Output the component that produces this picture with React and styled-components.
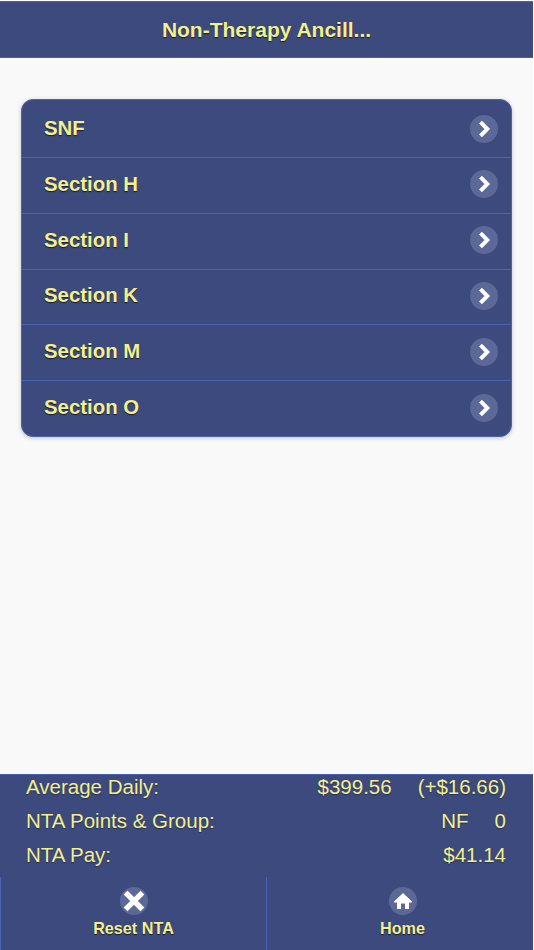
import React from "react";
import styled, { createGlobalStyle } from "styled-components";

const Global = createGlobalStyle`
  html, body { margin: 0; padding: 0; background: #ffffff; }
  body { font-family: "Liberation Sans", Arial, sans-serif; }
`;

const navy = "#3d4a7d";
const edge = "#4c63b5";
const cream = "#f4f08c";

const Page = styled.div`
  width: 533px;
  height: 950px;
  display: flex;
  flex-direction: column;
  background: #f9f9f9;
  overflow: hidden;
`;

const Header = styled.header`
  height: 55px;
  margin-top: 1px;
  flex: none;
  display: flex;
  align-items: center;
  justify-content: center;
  background: ${navy};
  border-top: 1px solid ${edge};
  border-bottom: 1px solid ${edge};
`;

const Title = styled.h1`
  margin: 0;
  font-size: 21px;
  font-weight: 700;
  color: ${cream};
  text-shadow: 0 1px 1px #15183a;
`;

const Content = styled.main`
  flex: 1;
  padding: 41px 21px 0;
`;

const List = styled.ul`
  list-style: none;
  margin: 0;
  padding: 0;
  background: ${navy};
  border: 1px solid ${edge};
  border-radius: 12px;
  box-shadow: 0 1px 4px rgba(0, 0, 0, 0.22);
  overflow: hidden;
`;

const Item = styled.li`
  height: ${(p) => (p.$first ? "57px" : "54.8px")};
  display: flex;
  align-items: center;
  justify-content: space-between;
  padding: 0 13px ${(p) => (p.$first ? "0" : "2px")} 22px;
  box-sizing: ${(p) => (p.$first ? "border-box" : "content-box")};
  height: ${(p) => (p.$first ? "57px" : "52.8px")};
  border-top: ${(p) => (p.$first ? "0" : `1px solid ${edge}`)};
`;

const ItemLabel = styled.span`
  font-size: 20.4px;
  font-weight: 700;
  color: ${cream};
  text-shadow: 0 1px 1px #15183a;
`;

const Badge = styled.span`
  width: 28px;
  height: 28px;
  border-radius: 50%;
  background: #5b6898;
  display: flex;
  align-items: center;
  justify-content: center;
  flex: none;
`;

const Footer = styled.footer`
  flex: none;
  background: ${navy};
  border-top: 1px solid ${edge};
`;

const Summary = styled.div`
  display: grid;
  grid-auto-rows: 24px;
  row-gap: 10px;
  padding: 0 27px 10px 26px;
`;

const SummaryRow = styled.div`
  display: flex;
  align-items: center;
  justify-content: space-between;
  font-size: 20.5px;
  color: ${cream};
  text-shadow: 0 1px 1px rgba(20, 24, 58, 0.55);
`;

const Values = styled.span`
  display: flex;
  gap: 26px;
`;

const Tabs = styled.nav`
  display: grid;
  grid-template-columns: 266px 1fr;
  height: 73px;
`;

const Tab = styled.button`
  appearance: none;
  background: none;
  border: 0;
  border-left: 1px solid ${edge};
  padding: 10px 0 0 ${(p) => p.$inset || "0"};
  display: flex;
  flex-direction: column;
  align-items: center;
  justify-content: flex-start;
  gap: 4px;
  font-family: inherit;
  font-size: 16.2px;
  font-weight: 700;
  color: ${cream};
  text-shadow: 0 1px 1px #15183a;
`;

const Chevron = () => (
  <svg width="16" height="20" viewBox="0 0 16 20">
    <path d="M4.5 3.2L11.3 10L4.5 16.8" fill="none" stroke="#fff" strokeWidth="4" />
  </svg>
);

const Close = () => (
  <svg width="22" height="22" viewBox="0 0 22 22">
    <path d="M4.5 4.5L17.5 17.5M17.5 4.5L4.5 17.5" fill="none" stroke="#fff" strokeWidth="5.4" strokeLinecap="square" />
  </svg>
);

const HomeIcon = () => (
  <svg width="20" height="20" viewBox="0 0 20 20">
    <path d="M10 2L19 10.5V11.5H16V18H12V12.5H8V18H4V11.5H1V10.5Z" fill="#fff" />
  </svg>
);

const sections = ["SNF", "Section H", "Section I", "Section K", "Section M", "Section O"];

export default function App() {
  return (
    <Page>
      <Global />
      <Header>
        <Title>Non-Therapy Ancill...</Title>
      </Header>
      <Content>
        <List>
          {sections.map((s, i) => (
            <Item key={s} $first={i === 0}>
              <ItemLabel>{s}</ItemLabel>
              <Badge>
                <Chevron />
              </Badge>
            </Item>
          ))}
        </List>
      </Content>
      <Footer>
        <Summary>
          <SummaryRow>
            <span>Average Daily:</span>
            <Values>
              <span>$399.56</span>
              <span>(+$16.66)</span>
            </Values>
          </SummaryRow>
          <SummaryRow>
            <span>NTA Points &amp; Group:</span>
            <Values>
              <span>NF</span>
              <span>0</span>
            </Values>
          </SummaryRow>
          <SummaryRow>
            <span>NTA Pay:</span>
            <span>$41.14</span>
          </SummaryRow>
        </Summary>
        <Tabs>
          <Tab>
            <Badge>
              <Close />
            </Badge>
            Reset NTA
          </Tab>
          <Tab $inset="5px">
            <Badge>
              <HomeIcon />
            </Badge>
            Home
          </Tab>
        </Tabs>
      </Footer>
    </Page>
  );
}
